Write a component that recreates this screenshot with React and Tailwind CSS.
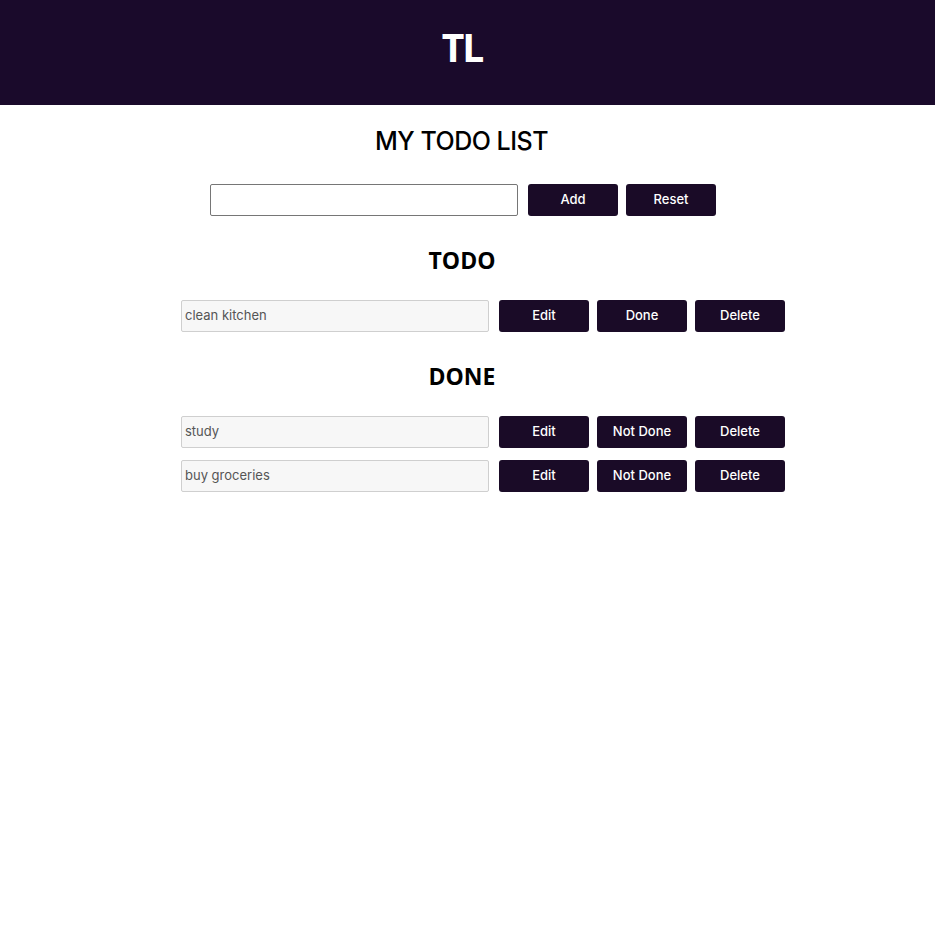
import React from "react";

const btn =
  "w-[90px] h-[32px] rounded-[3px] bg-[#1a0b27] text-white text-[13px] font-medium flex items-center justify-center";

function Row({ text, mid }) {
  return (
    <div className="flex items-center gap-[8px]">
      <div className="w-[308px] h-[32px] mr-[2px] border border-[#cfcfcf] bg-[#f7f7f7] rounded-[2px] flex items-center px-[3px] text-[13px] text-[#555]">
        {text}
      </div>
      <div className={btn}>Edit</div>
      <div className={btn}>{mid}</div>
      <div className={btn}>Delete</div>
    </div>
  );
}

export default function App() {
  return (
    <div className="min-h-[935px] bg-white" style={{ fontFamily: "Inter, 'Open Sans', sans-serif" }}>
      <header className="h-[105px] bg-[#1a0a2b] flex items-center justify-center pr-[11px]">
        <span className="text-white text-[39px] font-bold pb-[10px] tracking-[-2px]" style={{ fontFamily: "'Open Sans', sans-serif" }}>TL</span>
      </header>
      <h1 className="text-center text-[25px] font-medium text-black mt-[20px] leading-[32px] tracking-[-0.5px] pr-[12px]">MY TODO LIST</h1>
      <div className="flex justify-center items-center gap-[8px] mt-[27px] pr-[9px]">
        <div className="w-[308px] h-[32px] mr-[2px] border border-[#767676] rounded-[2px] bg-white" />
        <div className={btn}>Add</div>
        <div className={btn}>Reset</div>
      </div>
      <h2 className="text-center text-[23px] font-bold text-black mt-[28px] leading-[32px] pr-[11px]" style={{ fontFamily: "'Open Sans', sans-serif" }}>TODO</h2>
      <div className="flex flex-col items-center gap-[12px] mt-[24px] pl-[31px]">
        <Row text="clean kitchen" mid="Done" />
      </div>
      <h2 className="text-center text-[23px] font-bold text-black mt-[28px] leading-[32px] pr-[11px]" style={{ fontFamily: "'Open Sans', sans-serif" }}>DONE</h2>
      <div className="flex flex-col items-center gap-[12px] mt-[24px] pl-[31px]">
        <Row text="study" mid="Not Done" />
        <Row text="buy groceries" mid="Not Done" />
      </div>
    </div>
  );
}
